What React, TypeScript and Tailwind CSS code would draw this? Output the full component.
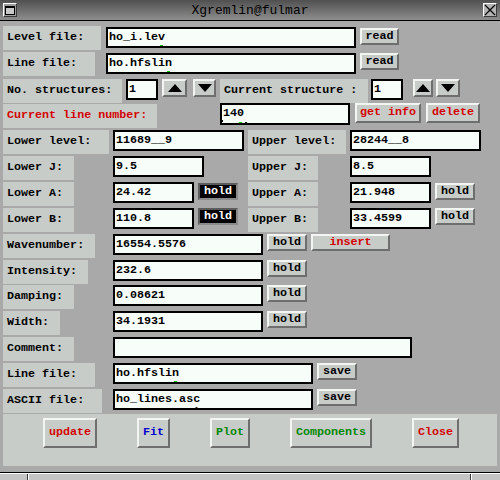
import React from "react";

const base = "font-['Liberation_Mono',monospace] font-bold text-[11.7px] leading-none";

function Label({ w, ml = "", h = "h-[24px]", red, children }: { w: string; ml?: string; h?: string; red?: boolean; children: React.ReactNode }) {
  return (
    <div className={`${w} ${ml} ${h} shrink-0 bg-[#c8ccc8] flex items-center pl-[4px] whitespace-pre ${red ? "text-[#d40000]" : "text-black"}`}>
      {children}
    </div>
  );
}

function Field({ w, ml = "", mt = "mt-[1px]", h = "h-[21px]", value = "", mark, ticks }: { w: string; ml?: string; mt?: string; h?: string; value?: string; mark?: "green" | "caret"; ticks?: boolean }) {
  const head = mark ? value.slice(0, -1) : value;
  const last = mark ? value.slice(-1) : "";
  return (
    <div className={`${w} ${ml} ${mt} ${h} relative shrink-0 border-2 border-black bg-[#f7fdf9] flex items-center pl-[1px] text-black whitespace-pre`}>
      {ticks && <span className="absolute left-0 bottom-[1px] w-[1px] h-[2px] bg-black" />}
      {head}
      {mark && (
        <span className="relative">
          {last}
          {mark === "green" ? (
            <span className="absolute left-[2px] bottom-[-3px] w-[3px] h-[1px] bg-[#00c000]" />
          ) : (
            <svg className="absolute left-[1px] bottom-[-5px]" width="5" height="3" viewBox="0 0 5 3">
              <path d="M0 3 L2.5 0 L5 3" stroke="black" strokeWidth="1" fill="none" />
            </svg>
          )}
          {ticks && <span className="absolute right-[-3px] bottom-[-3px] w-[2px] h-[1px] bg-black" />}
        </span>
      )}
    </div>
  );
}

function Btn({ w, h = "h-[17px]", ml = "", mt = "", color = "text-black", dark, children }: { w: string; h?: string; ml?: string; mt?: string; color?: string; dark?: boolean; children: React.ReactNode }) {
  const skin = dark
    ? "bg-black text-white border-t-[#5c5c5c] border-l-[#5c5c5c] border-b-[#8a8a8a] border-r-[#8a8a8a]"
    : `bg-[#c8ccc8] ${color} border-t-[#f2f5f2] border-l-[#f2f5f2] border-b-[#6e6e6e] border-r-[#6e6e6e]`;
  return (
    <div className={`${w} ${h} ${ml} ${mt} shrink-0 flex items-center justify-center border-2 whitespace-pre ${skin}`}>
      {children}
    </div>
  );
}

function Up() {
  return (
    <svg width="14" height="8" viewBox="0 0 14 8">
      <polygon points="7,0 14,8 0,8" fill="black" />
    </svg>
  );
}
function Down() {
  return (
    <svg width="14" height="8" viewBox="0 0 14 8">
      <polygon points="0,0 14,0 7,8" fill="black" />
    </svg>
  );
}

function Row({ h = "h-[26px]", children }: { h?: string; children: React.ReactNode }) {
  return <div className={`${h} flex items-start pl-[3px]`}>{children}</div>;
}

export default function App() {
  return (
    <div className={`w-[500px] h-[480px] bg-[#a9a9a9] overflow-hidden flex flex-col ${base}`}>
      {/* title bar */}
      <div className="h-[21px] shrink-0 border-b border-black bg-gradient-to-b from-[#505050] to-[#8e8e8e] flex items-start relative">
        <div className="ml-[3px] mt-[3px] w-[14px] h-[14px] bg-[#9c9c9c] border border-t-white border-l-white border-b-[#3a3a3a] border-r-[#3a3a3a] flex items-center justify-center">
          <div className="w-[10px] h-[9px] border border-black border-t-2 bg-[#c8c8c8]" />
        </div>
        <div className="flex-1 text-center mt-[4px] font-normal text-[13px] text-black">Xgremlin@fulmar</div>
        <div className="mr-[3px] mt-[3px] w-[14px] h-[14px] bg-[#b4b4b4] border border-t-white border-l-white border-b-[#3a3a3a] border-r-[#3a3a3a] flex items-center justify-center">
          <svg width="12" height="12" viewBox="0 0 12 12">
            <path d="M1 1 L11 11 M11 1 L1 11" stroke="black" strokeWidth="1.3" />
          </svg>
        </div>
      </div>

      <div className="pt-[5px] flex flex-col">
        <Row>
          <Label w="w-[98px]">Level file:</Label>
          <Field w="w-[250px]" ml="ml-[5px]" value="ho_i.lev" mark="green" />
          <Btn w="w-[39px]" ml="ml-[4px]" mt="mt-[2px]">read</Btn>
        </Row>
        <Row h="h-[27px]">
          <Label w="w-[92px]">Line file:</Label>
          <Field w="w-[250px]" ml="ml-[11px]" value="ho.hfslin" mark="green" />
          <Btn w="w-[39px]" ml="ml-[4px]" mt="mt-[1px]">read</Btn>
        </Row>
        <Row h="h-[25px]">
          <Label w="w-[119px]">No. structures:</Label>
          <Field w="w-[32px]" ml="ml-[4px]" mt="mt-0" value="1" />
          <Btn w="w-[25px]" h="h-[18px]" ml="ml-[4px]"><Up /></Btn>
          <Btn w="w-[23px]" h="h-[18px]" ml="ml-[6px]"><Down /></Btn>
          <Label w="w-[148px]" ml="ml-[4px]">Current structure :</Label>
          <Field w="w-[32px]" ml="ml-[3px]" mt="mt-0" value="1" />
          <Btn w="w-[20px]" h="h-[18px]" ml="ml-[10px]"><Up /></Btn>
          <Btn w="w-[24px]" h="h-[18px]" ml="ml-[3px]"><Down /></Btn>
        </Row>
        <Row>
          <Label w="w-[154px]" red>Current line number:</Label>
          <Field w="w-[130px]" ml="ml-[63px]" mt="mt-[-1px]" h="h-[22px]" value="140" mark="green" ticks />
          <Btn w="w-[66px]" h="h-[20px]" ml="ml-[5px]" mt="mt-[-1px]" color="text-[#d40000]">get info</Btn>
          <Btn w="w-[54px]" h="h-[20px]" ml="ml-[5px]" mt="mt-[-1px]" color="text-[#d40000]">delete</Btn>
        </Row>
        <Row>
          <Label w="w-[106px]">Lower level:</Label>
          <Field w="w-[131px]" ml="ml-[4px]" mt="mt-0" value="11689__9" />
          <Label w="w-[98px]" ml="ml-[4px]">Upper level:</Label>
          <Field w="w-[131px]" ml="ml-[4px]" mt="mt-0" value="28244__8" />
        </Row>
        <Row>
          <Label w="w-[71px]">Lower J:</Label>
          <Field w="w-[91px]" ml="ml-[39px]" mt="mt-0" value="9.5" />
          <Label w="w-[70px]" ml="ml-[44px]">Upper J:</Label>
          <Field w="w-[81px]" ml="ml-[32px]" mt="mt-0" value="8.5" />
        </Row>
        <Row>
          <Label w="w-[71px]">Lower A:</Label>
          <Field w="w-[81px]" ml="ml-[39px]" mt="mt-0" value="24.42" />
          <Btn w="w-[40px]" ml="ml-[4px]" mt="mt-[1px]" dark>hold</Btn>
          <Label w="w-[70px]" ml="ml-[10px]">Upper A:</Label>
          <Field w="w-[81px]" ml="ml-[32px]" mt="mt-0" value="21.948" />
          <Btn w="w-[40px]" ml="ml-[4px]" mt="mt-[1px]">hold</Btn>
        </Row>
        <Row>
          <Label w="w-[71px]">Lower B:</Label>
          <Field w="w-[81px]" ml="ml-[39px]" mt="mt-0" value="110.8" />
          <Btn w="w-[40px]" ml="ml-[4px]" dark>hold</Btn>
          <Label w="w-[70px]" ml="ml-[10px]">Upper B:</Label>
          <Field w="w-[81px]" ml="ml-[32px]" mt="mt-0" value="33.4599" />
          <Btn w="w-[40px]" ml="ml-[4px]">hold</Btn>
        </Row>
        <Row>
          <Label w="w-[92px]">Wavenumber:</Label>
          <Field w="w-[150px]" ml="ml-[18px]" mt="mt-0" value="16554.5576" />
          <Btn w="w-[40px]" ml="ml-[4px]">hold</Btn>
          <Btn w="w-[79px]" ml="ml-[4px]" color="text-[#d40000]">insert</Btn>
        </Row>
        <Row h="h-[25px]">
          <Label w="w-[85px]">Intensity:</Label>
          <Field w="w-[150px]" ml="ml-[25px]" mt="mt-0" value="232.6" />
          <Btn w="w-[40px]" ml="ml-[4px]">hold</Btn>
        </Row>
        <Row>
          <Label w="w-[71px]">Damping:</Label>
          <Field w="w-[150px]" ml="ml-[39px]" mt="mt-0" value="0.08621" />
          <Btn w="w-[40px]" ml="ml-[4px]">hold</Btn>
        </Row>
        <Row>
          <Label w="w-[57px]">Width:</Label>
          <Field w="w-[150px]" ml="ml-[53px]" mt="mt-0" value="34.1931" />
          <Btn w="w-[40px]" ml="ml-[4px]">hold</Btn>
        </Row>
        <Row>
          <Label w="w-[71px]">Comment:</Label>
          <Field w="w-[299px]" ml="ml-[39px]" mt="mt-0" value="" />
        </Row>
        <Row>
          <Label w="w-[92px]">Line file:</Label>
          <Field w="w-[200px]" ml="ml-[18px]" mt="mt-0" value="ho.hfslin" mark="green" />
          <Btn w="w-[40px]" ml="ml-[4px]">save</Btn>
        </Row>
        <Row h="h-[25px]">
          <Label w="w-[99px]">ASCII file:</Label>
          <Field w="w-[200px]" ml="ml-[11px]" mt="mt-0" value="ho_lines.asc" mark="caret" />
          <Btn w="w-[40px]" ml="ml-[4px]">save</Btn>
        </Row>
      </div>

      {/* bottom buttons */}
      <div className="mx-[3px] h-[52px] shrink-0 bg-[#c8ccc8] flex items-start pl-[40px] pt-[4px] gap-[40px]">
        <Btn w="w-[54px]" h="h-[30px]" color="text-[#d40000]">update</Btn>
        <Btn w="w-[33px]" h="h-[30px]" color="text-[#0000d0]">Fit</Btn>
        <Btn w="w-[40px]" h="h-[30px]" color="text-[#008800]">Plot</Btn>
        <Btn w="w-[82px]" h="h-[30px]" color="text-[#008800]">Components</Btn>
        <Btn w="w-[47px]" h="h-[30px]" color="text-[#d40000]">Close</Btn>
      </div>
      <div className="h-[6px] shrink-0" />
      <div className="h-[1px] shrink-0 bg-black" />
      <div className="h-[7px] shrink-0 bg-[#c4c4c4] border-t border-white flex">
        <div className="w-[28px] border-r border-[#3a3a3a]" />
        <div className="w-[443px] border-l border-white border-r border-r-[#3a3a3a]" />
        <div className="flex-1 border-l border-white" />
      </div>
    </div>
  );
}
